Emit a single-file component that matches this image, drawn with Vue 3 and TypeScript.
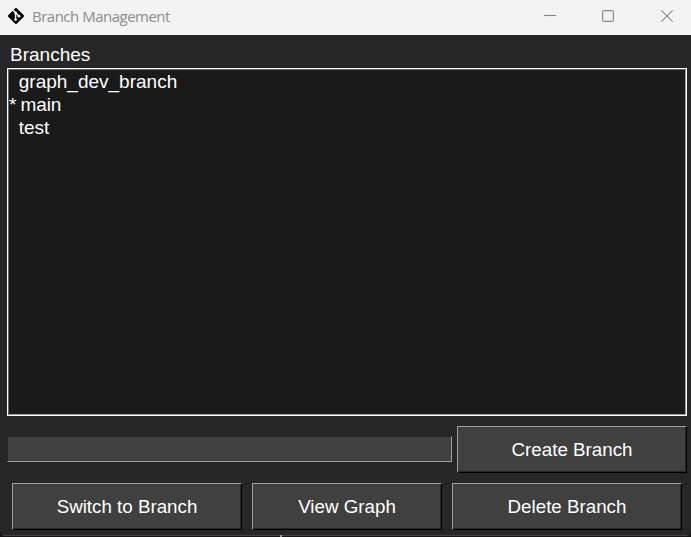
<script setup lang="ts">
import { ref } from 'vue'

interface Branch {
  name: string
  current: boolean
}

const branches = ref<Branch[]>([
  { name: 'graph_dev_branch', current: false },
  { name: 'main', current: true },
  { name: 'test', current: false },
])
const newBranch = ref('')
</script>

<template>
  <div class="window">
    <header class="titlebar">
      <svg class="logo" width="18" height="18" viewBox="0 0 18 18">
        <rect x="3" y="3" width="12" height="12" rx="1" transform="rotate(45 9 9)" fill="#000" />
        <path d="M6 3 L8.6 5.8 V12.7 M8.6 5.8 L12 9.2" fill="none" stroke="#f3f3f3" stroke-width="1.4" />
        <circle cx="8.6" cy="6" r="1.4" fill="#f3f3f3" />
        <circle cx="8.6" cy="12.6" r="1.4" fill="#f3f3f3" />
        <circle cx="12" cy="9.2" r="1.4" fill="#f3f3f3" />
      </svg>
      <span class="title">Branch Management</span>
      <div class="controls">
        <svg width="12" height="12" viewBox="0 0 12 12"><path d="M0 5.5H12" /></svg>
        <svg class="maximize" width="12" height="12" viewBox="0 0 12 12"><rect x=".6" y=".6" width="10.8" height="10.8" rx="1.3" /></svg>
        <svg width="12" height="12" viewBox="0 0 12 12"><path d="M.3 .3L11.7 11.7M11.7 .3L.3 11.7" /></svg>
      </div>
    </header>
    <main class="body">
      <div class="label">Branches</div>
      <ul class="list">
        <li v-for="b in branches" :key="b.name" :class="{ current: b.current }">{{ b.current ? '* ' : '  ' }}{{ b.name }}</li>
      </ul>
      <div class="create-row">
        <input v-model="newBranch" class="entry" type="text" />
        <button class="btn wide">Create Branch</button>
      </div>
      <div class="actions">
        <button class="btn wide">Switch to Branch</button>
        <button class="btn narrow">View Graph</button>
        <button class="btn wide">Delete Branch</button>
      </div>
    </main>
    <footer class="edge"><i></i></footer>
  </div>
</template>

<style>
body {
  margin: 0;
  background: #151214;
}
</style>

<style scoped>
.window {
  box-sizing: border-box;
  width: 691px;
  height: 537px;
  display: flex;
  flex-direction: column;
  overflow: hidden;
  background: #262626;
  color: #fff;
  font: 18.75px/23px "Liberation Sans", Arial, sans-serif;
  border-radius: 0 0 7px 7px;
}
.titlebar {
  box-sizing: border-box;
  height: 35px;
  flex: none;
  display: flex;
  align-items: center;
  padding: 0 18px 3px 7px;
  background: #f3f3f3;
}
.title {
  margin-left: 7px;
  color: #8c8c8c;
  font: 15px/20px "Open Sans", "Noto Sans", sans-serif;
  letter-spacing: -0.5px;
}
.controls {
  display: flex;
  gap: 46px;
  margin-left: auto;
}
.controls svg {
  display: block;
  fill: none;
  stroke: #868686;
  stroke-width: 1.1;
}
.controls .maximize {
  margin-right: 1px;
}
.body {
  flex: 1;
  display: flex;
  flex-direction: column;
  padding: 8px 4px 0 7px;
}
.label {
  height: 25px;
  padding-left: 3px;
  font-size: 19px;
}
.list {
  box-sizing: border-box;
  height: 348px;
  margin: 0;
  padding: 1px 0 0 1px;
  list-style: none;
  white-space: pre;
  font-size: 19px;
  word-spacing: -0.4px;
  background: #1a1a1a;
  border: 1px solid #fff;
  box-shadow: inset 1px 1px #696969, inset -1px -1px #a0a0a0;
}
.list li {
  height: 23px;
}
.list .current {
  word-spacing: -0.8px;
  letter-spacing: -0.15px;
}
.create-row {
  display: flex;
  align-items: flex-start;
  gap: 5px;
  margin-top: 10px;
}
.entry {
  box-sizing: border-box;
  flex: 1;
  min-width: 0;
  height: 26px;
  margin: 10px 0 0;
  padding: 0 3px;
  color: #fff;
  font: inherit;
  background: #404040;
  border: 1px solid;
  border-color: #262626 #a0a0a0 #a0a0a0 #262626;
  border-radius: 0;
  outline: none;
}
.btn {
  box-sizing: border-box;
  height: 47px;
  flex: none;
  margin: 0;
  padding: 0;
  color: #fff;
  font: inherit;
  background: #404040;
  border: 1px solid;
  border-color: #a0a0a0 #000 #000 #a0a0a0;
  border-radius: 0;
  box-shadow: inset -1px -1px #262626;
}
.wide {
  width: 230px;
}
.narrow {
  width: 190px;
}
.actions {
  display: flex;
  gap: 10px;
  margin: 10px 0 0 5px;
}
.edge {
  box-sizing: border-box;
  height: 2px;
  flex: none;
  padding-left: 280px;
  background: linear-gradient(#444 50%, #1b1517 50%);
}
.edge i {
  display: block;
  width: 2px;
  height: 2px;
  background: #999;
}
</style>
